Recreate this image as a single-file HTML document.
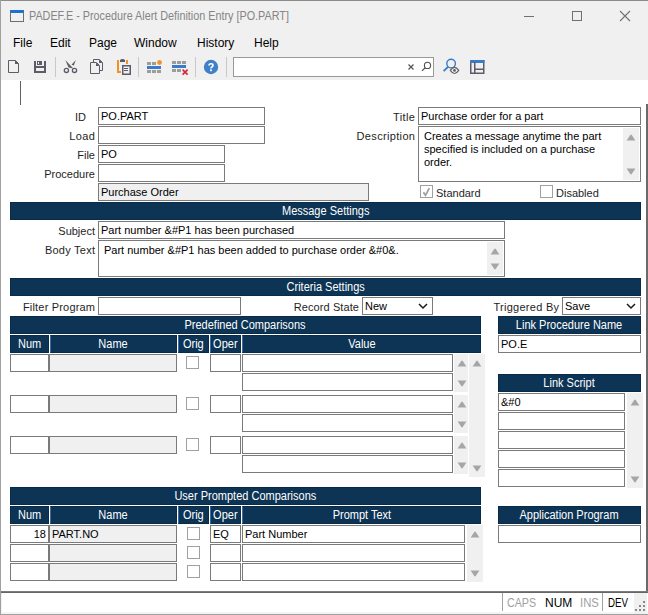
<!DOCTYPE html><html><head><meta charset="utf-8"><style>
*{margin:0;padding:0}
html,body{width:648px;height:615px;overflow:hidden;background:#f0f0f0;font-family:"Liberation Sans", sans-serif;}
.r{position:absolute;display:block}
.box{position:absolute;box-sizing:border-box;border:1px solid #7a7a7a;font-size:11px;line-height:16px;color:#000;white-space:nowrap;overflow:hidden}
.hdr{position:absolute;box-sizing:border-box;background:#0d3454;border:1px solid #082b4a;color:#fff;font-size:12px;line-height:15px;padding-top:1px;text-align:center;white-space:nowrap}
.lbl{position:absolute;font-size:11px;line-height:18px;padding-top:1px;color:#1e1e1e;white-space:nowrap}
.t{position:absolute;white-space:nowrap}
.hdr span{display:inline-block;transform:scaleX(0.917);transform-origin:50% 50%}
</style></head><body>
<div class="r" style="left:0px;top:0px;width:648px;height:1px;background:#8c8c8c;"></div>
<div class="r" style="left:0px;top:0px;width:1px;height:615px;background:#a0a0a0;"></div>
<div class="r" style="left:10px;top:10px;width:14px;height:12px;box-sizing:border-box;border:1px solid #6e6e6e;border-top:3px solid #1a73d0"></div>
<div class="t" style="left:29px;top:7px;font-size:12px;line-height:18px;color:#858585;transform:scaleX(0.9);transform-origin:0 0">PADEF.E - Procedure Alert Definition Entry [PO.PART]</div>
<div class="r" style="left:524px;top:16px;width:10px;height:1px;background:#707070;"></div>
<div class="r" style="left:572px;top:11px;width:10px;height:10px;box-sizing:border-box;border:1px solid #707070"></div>
<svg class="r" style="left:619px;top:10px" width="12" height="12"><path d="M1 1 L11 11 M11 1 L1 11" stroke="#707070" stroke-width="1.1"/></svg>
<div class="t" style="left:13px;top:34px;font-size:12px;line-height:18px;color:#000">File</div>
<div class="t" style="left:50px;top:34px;font-size:12px;line-height:18px;color:#000">Edit</div>
<div class="t" style="left:89px;top:34px;font-size:12px;line-height:18px;color:#000">Page</div>
<div class="t" style="left:134px;top:34px;font-size:12px;line-height:18px;color:#000">Window</div>
<div class="t" style="left:197px;top:34px;font-size:12px;line-height:18px;color:#000">History</div>
<div class="t" style="left:254px;top:34px;font-size:12px;line-height:18px;color:#000">Help</div>
<div class="r" style="left:55px;top:57px;width:1px;height:20px;background:#c8c8c8;"></div>
<div class="r" style="left:138px;top:57px;width:1px;height:20px;background:#c8c8c8;"></div>
<div class="r" style="left:195px;top:57px;width:1px;height:20px;background:#c8c8c8;"></div>
<div class="r" style="left:226px;top:57px;width:1px;height:20px;background:#c8c8c8;"></div>
<div class="r" style="left:233px;top:57px;width:201px;height:20px;box-sizing:border-box;border:1px solid #999;background:#fff"></div>
<svg class="r" style="left:0;top:0" width="648" height="80">
<g fill="none" stroke="#5c5c68" stroke-width="1">
<path d="M8.5 60.5 H15.5 L18.5 63.5 V72.5 H8.5 Z" fill="#f0f0f0"/>
</g>
<path d="M15 60 V64 H19 Z" fill="#5c5c68"/>
<path d="M34 61 H46 V73 H34 Z M36 61 V66 H44 V61 Z M36 68 V71 H44 V68 Z" fill="#5c5c68" fill-rule="evenodd"/>
<path d="M37 61 H42 V65 H37 Z M38 62 V64 H39 V62 Z" fill="#5c5c68" fill-rule="evenodd"/>
<circle cx="66.4" cy="70.4" r="2.1" fill="none" stroke="#5c5c68" stroke-width="1.3"/>
<circle cx="74.5" cy="70.4" r="2.1" fill="none" stroke="#5c5c68" stroke-width="1.3"/>
<path d="M65.3 60 L73.3 68.4 L68.6 67.6 Z" fill="#5c5c68"/>
<path d="M75.8 60 L73.8 65.5 L71.5 64.8 Z" fill="#5c5c68"/>
<g fill="#f0f0f0" stroke="#5c5c68" stroke-width="1">
<path d="M93.5 59.5 H99.5 L102.5 62.5 V70.5 H93.5 Z"/>
<path d="M90.5 62.5 H96.5 L99.5 65.5 V73.5 H90.5 Z"/>
</g>
<path d="M99 59.5 V63 H102.5 Z M96 62.5 V66 H99.5 Z" fill="#5c5c68"/>
<g fill="#f0922a">
<rect x="117" y="60" width="2" height="13"/><rect x="117" y="71" width="4" height="2"/><rect x="126" y="60" width="2" height="4"/>
</g>
<path d="M120.5 62 V60.5 Q120.5 59 122 59 H123 Q124.5 59 124.5 60.5 V62 Z" fill="#5c5c68"/>
<rect x="120" y="59.8" width="5" height="2.2" fill="#5c5c68"/>
<rect x="122.75" y="65.75" width="7.5" height="8.5" fill="#f0f0f0" stroke="#5c5c68" stroke-width="1.5"/>
<rect x="124" y="68" width="4" height="1" fill="#5c5c68"/><rect x="124" y="70" width="4" height="1" fill="#5c5c68"/>
<g fill="#9c9c9c">
<rect x="147" y="62" width="4" height="3"/><rect x="152" y="62" width="4" height="3"/>
<rect x="147" y="70" width="4" height="3"/><rect x="152" y="70" width="4" height="3"/><rect x="157" y="70" width="4" height="3"/>
<rect x="172" y="61" width="4" height="3"/><rect x="177" y="61" width="4" height="3"/><rect x="182" y="61" width="4" height="3"/>
<rect x="172" y="69" width="4" height="3"/><rect x="177" y="69" width="4" height="3"/>
</g>
<rect x="147" y="66" width="14" height="3" fill="#3b7cc9"/>
<rect x="172" y="65" width="14" height="3" fill="#3b7cc9"/>
<circle cx="159.5" cy="62.5" r="2.4" fill="#f0922a"/>
<path d="M182.6 69.6 L187.6 74.6 M187.6 69.6 L182.6 74.6" stroke="#d42a3c" stroke-width="1.7"/>
<circle cx="211" cy="67" r="7.2" fill="#3f80c8"/>
<path d="M209 65.6 Q209 63.7 211 63.7 Q213 63.7 213 65.3 Q213 66.4 211.9 66.9 Q211 67.3 211 68.4" fill="none" stroke="#fff" stroke-width="1.6"/>
<rect x="210.1" y="69.4" width="1.8" height="1.8" fill="#fff"/>
<path d="M408.5 64.5 L413.5 69.5 M413.5 64.5 L408.5 69.5" stroke="#505050" stroke-width="1.1"/>
<circle cx="427.5" cy="65.4" r="3.1" fill="none" stroke="#505050" stroke-width="1.1"/>
<path d="M425.3 67.6 L422 70.9" stroke="#505050" stroke-width="1.3"/>
<circle cx="451.1" cy="63.6" r="4.3" fill="none" stroke="#3b7cc9" stroke-width="1.4"/>
<path d="M448 66.8 L443.6 71.2" stroke="#3b7cc9" stroke-width="1.9"/>
<path d="M450.3 70.4 Q454.5 64.2 458.7 70.4 Q454.5 76.6 450.3 70.4 Z" fill="#f0f0f0" stroke="#606068" stroke-width="1.2"/>
<circle cx="454.5" cy="70.4" r="1.4" fill="#606068"/>
<rect x="470.75" y="60.75" width="13" height="12.5" fill="none" stroke="#5c5c68" stroke-width="1.5"/>
<rect x="470" y="60" width="14.5" height="3" fill="#3b7cc9"/>
<rect x="474" y="62" width="1.5" height="11" fill="#5c5c68"/>
<rect x="475" y="68.5" width="9" height="1.5" fill="#5c5c68"/>
</svg>
<div class="r" style="left:1px;top:80px;width:647px;height:513px;background:#ffffff;"></div>
<div class="r" style="left:646px;top:104px;width:2px;height:489px;background:#6a6a6a;"></div>
<div class="r" style="left:1px;top:591px;width:647px;height:1px;background:#7c7c7c;"></div>
<div class="r" style="left:1px;top:592px;width:647px;height:1px;background:#666666;"></div>
<div class="r" style="left:1px;top:593px;width:647px;height:21px;background:#ffffff;"></div>
<div class="r" style="left:1px;top:593px;width:1px;height:21px;background:#f0f0f0;"></div>
<div class="r" style="left:1px;top:612px;width:647px;height:2px;background:#f4f4f4;"></div>
<div class="r" style="left:1px;top:614px;width:647px;height:1px;background:#a0a0a0;"></div>
<div class="r" style="left:634px;top:593px;width:13px;height:21px;background:#f0f0f0;"></div>
<div class="r" style="left:502px;top:593px;width:1px;height:18px;background:#a0a0a0;"></div>
<div class="r" style="left:602px;top:593px;width:1px;height:18px;background:#a0a0a0;"></div>
<div class="t" style="left:507px;top:594px;font-size:12px;line-height:18px;color:#a0a0a0;transform:scaleX(0.89);transform-origin:0 0">CAPS</div>
<div class="t" style="left:545px;top:594px;font-size:12px;line-height:18px;color:#000">NUM</div>
<div class="t" style="left:580px;top:594px;font-size:12px;line-height:18px;color:#a0a0a0;transform:scaleX(0.94);transform-origin:0 0">INS</div>
<div class="t" style="left:608px;top:594px;font-size:12px;line-height:18px;color:#000;transform:scaleX(0.81);transform-origin:0 0">DEV</div>
<div class="r" style="left:635px;top:609px;width:2px;height:2px;background:#8a8a8a;"></div>
<div class="r" style="left:639px;top:609px;width:2px;height:2px;background:#8a8a8a;"></div>
<div class="r" style="left:643px;top:609px;width:2px;height:2px;background:#8a8a8a;"></div>
<div class="r" style="left:639px;top:605px;width:2px;height:2px;background:#8a8a8a;"></div>
<div class="r" style="left:643px;top:605px;width:2px;height:2px;background:#8a8a8a;"></div>
<div class="r" style="left:643px;top:601px;width:2px;height:2px;background:#8a8a8a;"></div>
<div class="r" style="left:20px;top:81px;width:1px;height:24px;background:#626262;"></div>
<div class="lbl" style="right:562px;top:107px;">ID</div>
<div class="box" style="left:98px;top:107px;width:167px;height:18px;background:#fff;text-align:left;padding-left:2px;">PO.PART</div>
<div class="lbl" style="right:553px;top:126px;letter-spacing:0.4px;margin-right:-0.4px">Load</div>
<div class="box" style="left:98px;top:126px;width:167px;height:18px;background:#fff;text-align:left;padding-left:2px;"></div>
<div class="lbl" style="right:553px;top:145px;">File</div>
<div class="box" style="left:98px;top:145px;width:127px;height:18px;background:#fff;text-align:left;padding-left:2px;">PO</div>
<div class="lbl" style="right:553px;top:164px;">Procedure</div>
<div class="box" style="left:98px;top:164px;width:127px;height:18px;background:#fff;text-align:left;padding-left:2px;"></div>
<div class="box" style="left:98px;top:183px;width:271px;height:18px;background:#f0f0f0;text-align:left;padding-left:2px;">Purchase Order</div>
<div class="lbl" style="right:233px;top:107px;letter-spacing:0.4px;margin-right:-0.4px">Title</div>
<div class="box" style="left:418px;top:107px;width:223px;height:18px;background:#fff;text-align:left;padding-left:2px;">Purchase order for a part</div>
<div class="lbl" style="right:233px;top:126px;letter-spacing:0.34px;margin-right:-0.34px">Description</div>
<div class="box" style="left:418px;top:126px;width:223px;height:56px;background:#fff;text-align:left;padding-left:5px;line-height:13px;padding-top:3px;white-space:normal">Creates a message anytime the part<br>specified is included on a purchase<br>order.</div>
<div class="r" style="left:623px;top:128px;width:16px;height:52px;background:#f0f0f0;"></div>
<svg class="r" style="left:626px;top:134px" width="10" height="8"><path d="M0.6 6.6 L4.1 1.2 Q5 0 5.9 1.2 L9.4 6.6 Z" fill="#a6a6a6"/></svg>
<svg class="r" style="left:626px;top:168px" width="10" height="8"><path d="M0.6 0.4 L4.1 5.8 Q5 7 5.9 5.8 L9.4 0.4 Z" fill="#a6a6a6"/></svg>
<div class="r" style="left:420px;top:185px;width:13px;height:13px;box-sizing:border-box;border:1px solid #a0a0a0;background:#fff"></div>
<svg class="r" style="left:420px;top:185px" width="13" height="13"><path d="M3.4 7.3 L5.5 10.3 L9.3 3.2" stroke="#a0a0a0" stroke-width="1.8" fill="none"/></svg>
<div class="t" style="left:436px;top:187px;font-size:11px;line-height:13px;color:#1e1e1e">Standard</div>
<div class="r" style="left:540px;top:185px;width:13px;height:13px;box-sizing:border-box;border:1px solid #a0a0a0;background:#fff"></div>
<div class="t" style="left:556px;top:187px;font-size:11px;line-height:13px;color:#1e1e1e">Disabled</div>
<div class="hdr" style="left:10px;top:202px;width:631px;height:18px;"><span>Message Settings</span></div>
<div class="lbl" style="right:553px;top:221px;">Subject</div>
<div class="box" style="left:98px;top:221px;width:407px;height:18px;background:#fff;text-align:left;padding-left:2px;">Part number &amp;#P1 has been purchased</div>
<div class="lbl" style="right:553px;top:240px;letter-spacing:0.25px;margin-right:-0.25px">Body Text</div>
<div class="box" style="left:98px;top:240px;width:407px;height:37px;background:#fff;text-align:left;padding-left:5px;padding-top:1px">Part number &amp;#P1 has been added to purchase order &amp;#0&amp;.</div>
<div class="r" style="left:487px;top:242px;width:16px;height:33px;background:#f0f0f0;"></div>
<svg class="r" style="left:490px;top:248px" width="10" height="8"><path d="M0.6 6.6 L4.1 1.2 Q5 0 5.9 1.2 L9.4 6.6 Z" fill="#a6a6a6"/></svg>
<svg class="r" style="left:490px;top:263px" width="10" height="8"><path d="M0.6 0.4 L4.1 5.8 Q5 7 5.9 5.8 L9.4 0.4 Z" fill="#a6a6a6"/></svg>
<div class="hdr" style="left:10px;top:278px;width:631px;height:18px;"><span>Criteria Settings</span></div>
<div class="lbl" style="right:553px;top:297px;letter-spacing:0.18px;margin-right:-0.18px">Filter Program</div>
<div class="box" style="left:98px;top:297px;width:143px;height:18px;background:#fff;text-align:left;padding-left:2px;"></div>
<div class="lbl" style="right:289px;top:297px;letter-spacing:0.1px;margin-right:-0.1px">Record State</div>
<div class="box" style="left:362px;top:297px;width:71px;height:18px;background:#fff;text-align:left;padding-left:2px;">New</div>
<div class="lbl" style="right:89px;top:297px;letter-spacing:0.27px;margin-right:-0.27px">Triggered By</div>
<div class="box" style="left:562px;top:297px;width:79px;height:18px;background:#fff;text-align:left;padding-left:2px;">Save</div>
<svg class="r" style="left:418px;top:302px" width="10" height="8"><path d="M1 2 L5 6 L9 2" stroke="#1a1a1a" stroke-width="1.5" fill="none"/></svg>
<svg class="r" style="left:626px;top:302px" width="10" height="8"><path d="M1 2 L5 6 L9 2" stroke="#1a1a1a" stroke-width="1.5" fill="none"/></svg>
<div class="hdr" style="left:10px;top:316px;width:471px;height:18px;"><span>Predefined Comparisons</span></div>
<div class="hdr" style="left:10px;top:335px;width:39px;height:18px;"><span>Num</span></div>
<div class="hdr" style="left:50px;top:335px;width:127px;height:18px;border-left-color:#3a6ca3"><span>Name</span></div>
<div class="hdr" style="left:178px;top:335px;width:31px;height:18px;border-left-color:#3a6ca3"><span>Orig</span></div>
<div class="hdr" style="left:210px;top:335px;width:31px;height:18px;border-left-color:#3a6ca3"><span>Oper</span></div>
<div class="hdr" style="left:242px;top:335px;width:239px;height:18px;border-left-color:#3a6ca3"><span>Value</span></div>
<div class="box" style="left:10px;top:354px;width:39px;height:18px;background:#fff;text-align:left;padding-left:2px;"></div>
<div class="box" style="left:49px;top:354px;width:128px;height:18px;background:#f0f0f0;text-align:left;padding-left:2px;"></div>
<div class="r" style="left:186px;top:356px;width:13px;height:13px;box-sizing:border-box;border:1px solid #a0a0a0;background:#fff"></div>
<div class="box" style="left:210px;top:354px;width:31px;height:18px;background:#fff;text-align:left;padding-left:2px;"></div>
<div class="box" style="left:242px;top:354px;width:211px;height:18px;background:#fff;text-align:left;padding-left:2px;"></div>
<div class="box" style="left:242px;top:373px;width:211px;height:18px;background:#fff;text-align:left;padding-left:2px;"></div>
<div class="r" style="left:454px;top:354px;width:14px;height:38px;background:#f0f0f0;"></div>
<svg class="r" style="left:457px;top:360px" width="10" height="8"><path d="M0.6 6.6 L4.1 1.2 Q5 0 5.9 1.2 L9.4 6.6 Z" fill="#a6a6a6"/></svg>
<svg class="r" style="left:457px;top:380px" width="10" height="8"><path d="M0.6 0.4 L4.1 5.8 Q5 7 5.9 5.8 L9.4 0.4 Z" fill="#a6a6a6"/></svg>
<div class="box" style="left:10px;top:395px;width:39px;height:18px;background:#fff;text-align:left;padding-left:2px;"></div>
<div class="box" style="left:49px;top:395px;width:128px;height:18px;background:#f0f0f0;text-align:left;padding-left:2px;"></div>
<div class="r" style="left:186px;top:397px;width:13px;height:13px;box-sizing:border-box;border:1px solid #a0a0a0;background:#fff"></div>
<div class="box" style="left:210px;top:395px;width:31px;height:18px;background:#fff;text-align:left;padding-left:2px;"></div>
<div class="box" style="left:242px;top:395px;width:211px;height:18px;background:#fff;text-align:left;padding-left:2px;"></div>
<div class="box" style="left:242px;top:414px;width:211px;height:18px;background:#fff;text-align:left;padding-left:2px;"></div>
<div class="r" style="left:454px;top:395px;width:14px;height:38px;background:#f0f0f0;"></div>
<svg class="r" style="left:457px;top:401px" width="10" height="8"><path d="M0.6 6.6 L4.1 1.2 Q5 0 5.9 1.2 L9.4 6.6 Z" fill="#a6a6a6"/></svg>
<svg class="r" style="left:457px;top:421px" width="10" height="8"><path d="M0.6 0.4 L4.1 5.8 Q5 7 5.9 5.8 L9.4 0.4 Z" fill="#a6a6a6"/></svg>
<div class="box" style="left:10px;top:436px;width:39px;height:18px;background:#fff;text-align:left;padding-left:2px;"></div>
<div class="box" style="left:49px;top:436px;width:128px;height:18px;background:#f0f0f0;text-align:left;padding-left:2px;"></div>
<div class="r" style="left:186px;top:438px;width:13px;height:13px;box-sizing:border-box;border:1px solid #a0a0a0;background:#fff"></div>
<div class="box" style="left:210px;top:436px;width:31px;height:18px;background:#fff;text-align:left;padding-left:2px;"></div>
<div class="box" style="left:242px;top:436px;width:211px;height:18px;background:#fff;text-align:left;padding-left:2px;"></div>
<div class="box" style="left:242px;top:455px;width:211px;height:18px;background:#fff;text-align:left;padding-left:2px;"></div>
<div class="r" style="left:454px;top:436px;width:14px;height:38px;background:#f0f0f0;"></div>
<svg class="r" style="left:457px;top:442px" width="10" height="8"><path d="M0.6 6.6 L4.1 1.2 Q5 0 5.9 1.2 L9.4 6.6 Z" fill="#a6a6a6"/></svg>
<svg class="r" style="left:457px;top:462px" width="10" height="8"><path d="M0.6 0.4 L4.1 5.8 Q5 7 5.9 5.8 L9.4 0.4 Z" fill="#a6a6a6"/></svg>
<div class="r" style="left:469px;top:354px;width:16px;height:123px;background:#f0f0f0;"></div>
<svg class="r" style="left:472px;top:360px" width="10" height="8"><path d="M0.6 6.6 L4.1 1.2 Q5 0 5.9 1.2 L9.4 6.6 Z" fill="#a6a6a6"/></svg>
<svg class="r" style="left:472px;top:465px" width="10" height="8"><path d="M0.6 0.4 L4.1 5.8 Q5 7 5.9 5.8 L9.4 0.4 Z" fill="#a6a6a6"/></svg>
<div class="hdr" style="left:498px;top:316px;width:143px;height:18px;"><span>Link Procedure Name</span></div>
<div class="box" style="left:498px;top:335px;width:143px;height:18px;background:#fff;text-align:left;padding-left:2px;">PO.E</div>
<div class="hdr" style="left:498px;top:374px;width:143px;height:18px;"><span>Link Script</span></div>
<div class="box" style="left:498px;top:393px;width:127px;height:18px;background:#fff;text-align:left;padding-left:2px;">&amp;#0</div>
<div class="box" style="left:498px;top:412px;width:127px;height:18px;background:#fff;text-align:left;padding-left:2px;"></div>
<div class="box" style="left:498px;top:431px;width:127px;height:18px;background:#fff;text-align:left;padding-left:2px;"></div>
<div class="box" style="left:498px;top:450px;width:127px;height:18px;background:#fff;text-align:left;padding-left:2px;"></div>
<div class="box" style="left:498px;top:469px;width:127px;height:18px;background:#fff;text-align:left;padding-left:2px;"></div>
<div class="r" style="left:627px;top:393px;width:16px;height:95px;background:#f0f0f0;"></div>
<svg class="r" style="left:630px;top:399px" width="10" height="8"><path d="M0.6 6.6 L4.1 1.2 Q5 0 5.9 1.2 L9.4 6.6 Z" fill="#a6a6a6"/></svg>
<svg class="r" style="left:630px;top:476px" width="10" height="8"><path d="M0.6 0.4 L4.1 5.8 Q5 7 5.9 5.8 L9.4 0.4 Z" fill="#a6a6a6"/></svg>
<div class="hdr" style="left:10px;top:487px;width:471px;height:18px;"><span>User Prompted Comparisons</span></div>
<div class="hdr" style="left:10px;top:506px;width:39px;height:18px;"><span>Num</span></div>
<div class="hdr" style="left:50px;top:506px;width:127px;height:18px;border-left-color:#3a6ca3"><span>Name</span></div>
<div class="hdr" style="left:178px;top:506px;width:31px;height:18px;border-left-color:#3a6ca3"><span>Orig</span></div>
<div class="hdr" style="left:210px;top:506px;width:31px;height:18px;border-left-color:#3a6ca3"><span>Oper</span></div>
<div class="hdr" style="left:242px;top:506px;width:239px;height:18px;border-left-color:#3a6ca3"><span>Prompt Text</span></div>
<div class="box" style="left:10px;top:525px;width:39px;height:18px;background:#fff;text-align:right;padding-right:2px;">18</div>
<div class="box" style="left:49px;top:525px;width:128px;height:18px;background:#f0f0f0;text-align:left;padding-left:2px;">PART.NO</div>
<div class="r" style="left:187px;top:527px;width:13px;height:13px;box-sizing:border-box;border:1px solid #a0a0a0;background:#fff"></div>
<div class="box" style="left:210px;top:525px;width:31px;height:18px;background:#fff;text-align:left;padding-left:2px;">EQ</div>
<div class="box" style="left:242px;top:525px;width:223px;height:18px;background:#fff;text-align:left;padding-left:2px;">Part Number</div>
<div class="box" style="left:10px;top:544px;width:39px;height:18px;background:#fff;text-align:right;padding-right:2px;"></div>
<div class="box" style="left:49px;top:544px;width:128px;height:18px;background:#f0f0f0;text-align:left;padding-left:2px;"></div>
<div class="r" style="left:187px;top:546px;width:13px;height:13px;box-sizing:border-box;border:1px solid #a0a0a0;background:#fff"></div>
<div class="box" style="left:210px;top:544px;width:31px;height:18px;background:#fff;text-align:left;padding-left:2px;"></div>
<div class="box" style="left:242px;top:544px;width:223px;height:18px;background:#fff;text-align:left;padding-left:2px;"></div>
<div class="box" style="left:10px;top:563px;width:39px;height:18px;background:#fff;text-align:right;padding-right:2px;"></div>
<div class="box" style="left:49px;top:563px;width:128px;height:18px;background:#f0f0f0;text-align:left;padding-left:2px;"></div>
<div class="r" style="left:187px;top:565px;width:13px;height:13px;box-sizing:border-box;border:1px solid #a0a0a0;background:#fff"></div>
<div class="box" style="left:210px;top:563px;width:31px;height:18px;background:#fff;text-align:left;padding-left:2px;"></div>
<div class="box" style="left:242px;top:563px;width:223px;height:18px;background:#fff;text-align:left;padding-left:2px;"></div>
<div class="r" style="left:467px;top:525px;width:16px;height:57px;background:#f0f0f0;"></div>
<svg class="r" style="left:470px;top:531px" width="10" height="8"><path d="M0.6 6.6 L4.1 1.2 Q5 0 5.9 1.2 L9.4 6.6 Z" fill="#a6a6a6"/></svg>
<svg class="r" style="left:470px;top:570px" width="10" height="8"><path d="M0.6 0.4 L4.1 5.8 Q5 7 5.9 5.8 L9.4 0.4 Z" fill="#a6a6a6"/></svg>
<div class="hdr" style="left:498px;top:506px;width:143px;height:18px;"><span>Application Program</span></div>
<div class="box" style="left:498px;top:525px;width:143px;height:18px;background:#fff;text-align:left;padding-left:2px;"></div>
</body></html>
